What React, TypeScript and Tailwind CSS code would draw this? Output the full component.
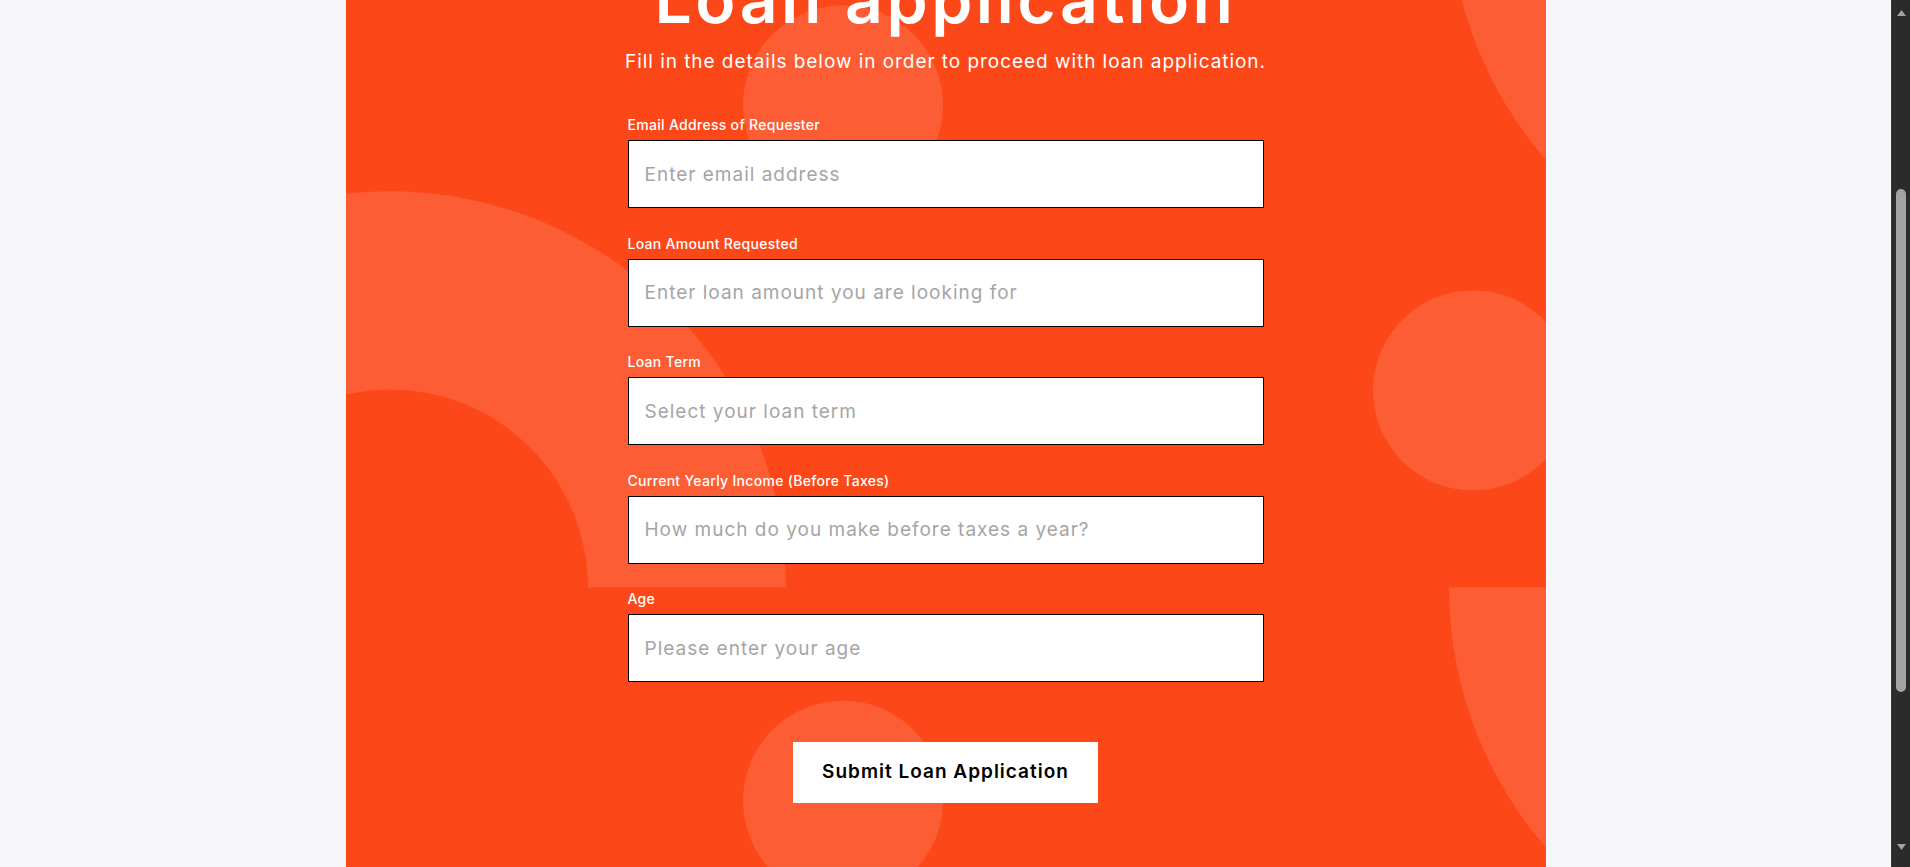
import { useLayoutEffect, useRef } from "react"

const fields = [
  { label: "Email Address of Requester", placeholder: "Enter email address", type: "email" },
  { label: "Loan Amount Requested", placeholder: "Enter loan amount you are looking for", type: "text" },
  { label: "Loan Term", placeholder: "Select your loan term", type: "text" },
  { label: "Current Yearly Income (Before Taxes)", placeholder: "How much do you make before taxes a year?", type: "text" },
  { label: "Age", placeholder: "Please enter your age", type: "text" },
]

function Decorations() {
  return (
    <svg
      className="pointer-events-none absolute inset-0 h-full w-full"
      viewBox="0 0 1200 1436"
      preserveAspectRatio="none"
      aria-hidden="true"
    >
      <g fill="#fd5d34">
        <circle cx="497" cy="400" r="100" />
        <circle cx="497" cy="1095" r="100" />
        <circle cx="1127" cy="685" r="100" />
        {/* left half ring */}
        <path d="M -352 882 A 396 396 0 0 1 440 882 L 242 882 A 198 198 0 0 0 -154 882 Z" />
        {/* right lower half ring */}
        <path d="M 1103 882 A 396 396 0 0 0 1895 882 L 1697 882 A 198 198 0 0 1 1301 882 Z" />
        {/* top right ring */}
        <path d="M 1103 195 A 396 396 0 0 0 1895 195 L 1697 195 A 198 198 0 0 1 1301 195 Z" />
      </g>
    </svg>
  )
}

// the window's scrollbar, as it shows in the screenshot
function Scrollbar() {
  return (
    <div className="flex h-screen w-[19px] shrink-0 flex-col border-l border-[#363636] bg-[#2b2b2b]">
      <div className="flex h-[17px] items-end justify-center pb-[1px]">
        <svg width="9" height="6" viewBox="0 0 9 6">
          <polygon points="4.5,0 9,6 0,6" fill="#a3a3a3" />
        </svg>
      </div>
      <div className="h-[172px]" />
      <div className="mx-auto h-[503px] w-[10px] rounded-full bg-[#a3a3a3]" />
      <div className="flex-1" />
      <div className="flex h-[24px] items-start justify-center pt-[1px]">
        <svg width="9" height="6" viewBox="0 0 9 6">
          <polygon points="0,0 9,0 4.5,6" fill="#a3a3a3" />
        </svg>
      </div>
    </div>
  )
}

export default function App() {
  const scroller = useRef<HTMLDivElement>(null)

  useLayoutEffect(() => {
    if (scroller.current) scroller.current.scrollTop = 295
  }, [])

  return (
    <div className="flex h-screen bg-[#f5f5fa] font-['Inter',sans-serif]">
      <div ref={scroller} className="h-screen flex-1 overflow-y-scroll [scrollbar-width:none]">
        <main className="relative mx-auto w-[1200px] overflow-hidden bg-[#fc4819] pt-[258px] pb-[339px]">
          <Decorations />

          <div className="relative flex flex-col items-center">
            <h1 className="text-[66px] font-semibold leading-[72px] tracking-[3.5px] text-white">
              Loan application
            </h1>
            <p className="mt-[13px] text-[19px] leading-[28px] tracking-[0.95px] text-white">
              Fill in the details below in order to proceed with loan application.
            </p>

            <form className="mt-[40px] flex w-[636px] flex-col items-center">
              <div className="flex w-full flex-col gap-[26.5px]">
                {fields.map((field) => (
                  <label key={field.label} className="flex flex-col gap-[6px]">
                    <span className="text-[14px] font-medium leading-[18px] tracking-[0.3px] text-white">
                      {field.label}
                    </span>
                    <input
                      type={field.type}
                      placeholder={field.placeholder}
                      className="h-[68px] w-full border border-black bg-white px-4 text-[19px] tracking-[1px] text-black outline-none placeholder:text-[#a5a5a5]"
                    />
                  </label>
                ))}
              </div>

              <button
                type="button"
                className="mt-[60px] h-[61px] w-[305px] bg-white text-[19px] font-semibold tracking-[1px] text-black"
              >
                Submit Loan Application
              </button>
            </form>
          </div>
        </main>
      </div>
      <Scrollbar />
    </div>
  )
}
